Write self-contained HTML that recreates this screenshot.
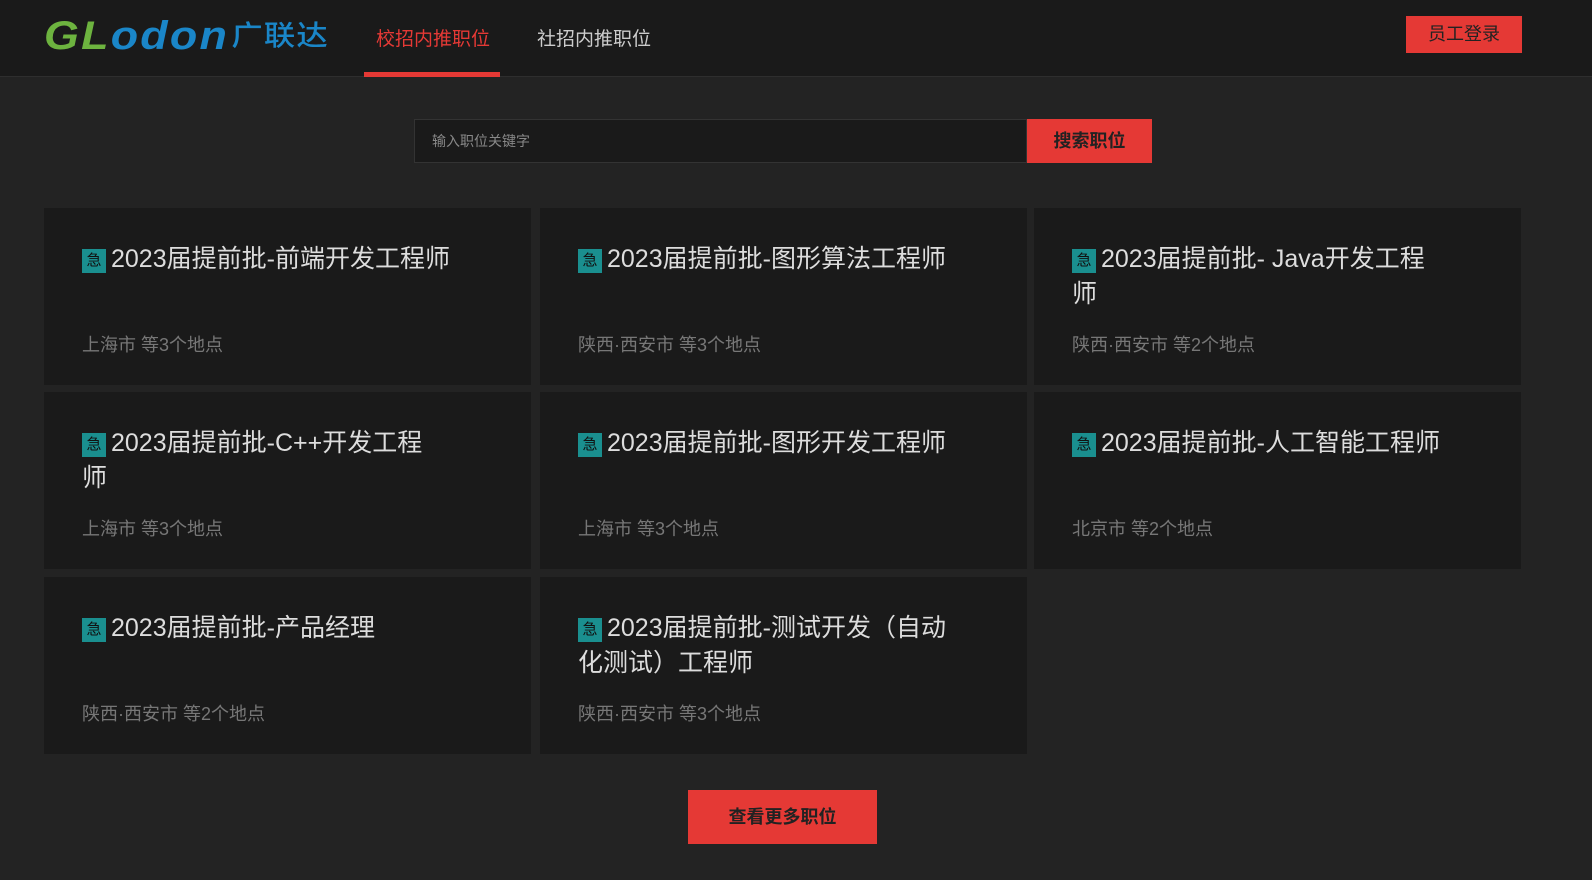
<!DOCTYPE html>
<html><head><meta charset="utf-8"><style>
*{margin:0;padding:0;box-sizing:border-box}
body{width:1592px;height:880px;background:#232323;font-family:"Liberation Sans","Noto Sans CJK SC",sans-serif;overflow:hidden;position:relative}
.hdr{position:absolute;left:0;top:0;width:1592px;height:77px;background:#1a1a1a;border-bottom:1px solid #2e2e2e}
.logo{position:absolute;left:44px;top:14px;font-size:40px;font-style:italic;font-weight:bold;letter-spacing:2px;font-family:"Liberation Sans",sans-serif;white-space:nowrap;transform:scaleX(1.12);transform-origin:left}
.logo .g{color:#6db33f}.logo .b{color:#1a86c8}
.logo .cn{font-style:normal;font-size:28px;color:#1a86c8;font-family:"Noto Sans CJK SC",sans-serif;font-weight:500;margin-left:2px;position:relative;top:-4px;letter-spacing:1px}
.nav{position:absolute;top:24px;font-size:19px}
.nav1{left:376px;color:#e53935}
.nav2{left:537px;color:#ccc}
.ul{position:absolute;left:364px;top:72px;width:136px;height:5px;background:#e53935}
.login{position:absolute;left:1406px;top:16px;width:116px;height:37px;background:#e53935;color:#222;font-size:18px;text-align:center;line-height:37px}
.inp{position:absolute;left:414px;top:119px;width:613px;height:44px;background:#1a1a1a;border:1px solid #333;color:#888;font-size:14px;line-height:42px;padding-left:17px}
.sbtn{position:absolute;left:1027px;top:119px;width:125px;height:44px;background:#e53935;color:#222;font-size:18px;font-weight:bold;text-align:center;line-height:44px}
.card{position:absolute;width:487px;height:177px;background:#1a1a1a}
.t{position:absolute;left:38px;top:34px;font-size:25px;color:#ddd;line-height:35px;white-space:nowrap}
.bd{display:inline-block;width:24px;height:24px;background:#1a8f8f;color:#111;font-size:15px;text-align:center;line-height:24px;vertical-align:2px;margin-right:5px}
.l{position:absolute;left:38px;top:123px;font-size:18px;color:#777}
.more{position:absolute;left:688px;top:790px;width:189px;height:54px;background:#e53935;color:#222;font-size:18px;font-weight:bold;text-align:center;line-height:54px}
</style></head><body>
<div class="hdr">
<div class="logo"><span class="g">GL</span><span class="b">odon</span><span class="cn">广联达</span></div>
<div class="nav nav1">校招内推职位</div><div class="nav nav2">社招内推职位</div>
<div class="ul"></div>
<div class="login">员工登录</div>
</div>
<div class="inp">输入职位关键字</div><div class="sbtn">搜索职位</div>
<div class="card" style="left:44px;top:208px"><div class="t"><span class="bd">急</span>2023届提前批-前端开发工程师</div><div class="l">上海市 等3个地点</div></div>
<div class="card" style="left:540px;top:208px"><div class="t"><span class="bd">急</span>2023届提前批-图形算法工程师</div><div class="l">陕西·西安市 等3个地点</div></div>
<div class="card" style="left:1034px;top:208px"><div class="t"><span class="bd">急</span>2023届提前批- Java开发工程<br>师</div><div class="l">陕西·西安市 等2个地点</div></div>
<div class="card" style="left:44px;top:392px"><div class="t"><span class="bd">急</span>2023届提前批-C++开发工程<br>师</div><div class="l">上海市 等3个地点</div></div>
<div class="card" style="left:540px;top:392px"><div class="t"><span class="bd">急</span>2023届提前批-图形开发工程师</div><div class="l">上海市 等3个地点</div></div>
<div class="card" style="left:1034px;top:392px"><div class="t"><span class="bd">急</span>2023届提前批-人工智能工程师</div><div class="l">北京市 等2个地点</div></div>
<div class="card" style="left:44px;top:577px"><div class="t"><span class="bd">急</span>2023届提前批-产品经理</div><div class="l">陕西·西安市 等2个地点</div></div>
<div class="card" style="left:540px;top:577px"><div class="t"><span class="bd">急</span>2023届提前批-测试开发（自动<br>化测试）工程师</div><div class="l">陕西·西安市 等3个地点</div></div>
<div class="more">查看更多职位</div>
</body></html>
